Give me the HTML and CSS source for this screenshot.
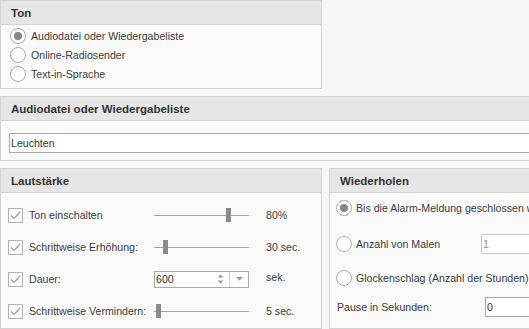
FILE: index.html
```html
<!DOCTYPE html>
<html>
<head>
<meta charset="utf-8">
<link rel="stylesheet" href="styles.css">
</head>
<body>
<div class="page">
  <div class="panel ton">
    <div class="hdr">Ton</div>
    <div class="ton-body">
      <div class="rrow"><span class="radio on"></span><span>Audiodatei oder Wiedergabeliste</span></div>
      <div class="rrow"><span class="radio"></span><span>Online-Radiosender</span></div>
      <div class="rrow"><span class="radio"></span><span>Text-in-Sprache</span></div>
    </div>
  </div>

  <div class="panel file">
    <div class="hdr">Audiodatei oder Wiedergabeliste</div>
    <div class="file-body">
      <div class="input wide">Leuchten</div>
    </div>
  </div>

  <div class="bottom">
    <div class="panel vol">
      <div class="hdr">Lautstärke</div>
      <div class="vol-body">
        <div class="crow">
          <div class="lab"><span class="check"><svg width="11" height="9" viewBox="0 0 11 9"><path d="M1 4.5 L4 7.5 L10 1" fill="none" stroke="#9a9a9a" stroke-width="1.2"/></svg></span>Ton einschalten</div>
          <div class="slider"><span class="track"></span><span class="thumb" style="left:72px"></span></div>
          <div class="val">80%</div>
        </div>
        <div class="crow">
          <div class="lab"><span class="check"><svg width="11" height="9" viewBox="0 0 11 9"><path d="M1 4.5 L4 7.5 L10 1" fill="none" stroke="#9a9a9a" stroke-width="1.2"/></svg></span>Schrittweise Erhöhung:</div>
          <div class="slider"><span class="track"></span><span class="thumb" style="left:9px"></span></div>
          <div class="val">30 sec.</div>
        </div>
        <div class="crow">
          <div class="lab"><span class="check"><svg width="11" height="9" viewBox="0 0 11 9"><path d="M1 4.5 L4 7.5 L10 1" fill="none" stroke="#9a9a9a" stroke-width="1.2"/></svg></span>Dauer:</div>
          <div class="spin">
            <span class="spin-text">600</span>
            <span class="spin-arrows"><svg width="7" height="12" viewBox="0 0 7 12"><path d="M0.5 4.5 L3.5 1.5 L6.5 4.5 Z M0.5 7.5 L3.5 10.5 L6.5 7.5 Z" fill="#9a9a9a"/></svg></span>
            <span class="spin-drop"><svg width="7" height="4" viewBox="0 0 7 4"><path d="M0 0 L7 0 L3.5 3.5 Z" fill="#9a9a9a"/></svg></span>
          </div>
          <div class="val up">sek.</div>
        </div>
        <div class="crow">
          <div class="lab"><span class="check"><svg width="11" height="9" viewBox="0 0 11 9"><path d="M1 4.5 L4 7.5 L10 1" fill="none" stroke="#9a9a9a" stroke-width="1.2"/></svg></span>Schrittweise Vermindern:</div>
          <div class="slider"><span class="track"></span><span class="thumb" style="left:2px"></span></div>
          <div class="val">5 sec.</div>
        </div>
      </div>
    </div>

    <div class="panel rep">
      <div class="hdr">Wiederholen</div>
      <div class="rep-body">
        <div class="prow r1"><span class="radio on"></span><span>Bis die Alarm-Meldung geschlossen wird</span></div>
        <div class="prow r2"><span class="radio"></span><span class="plab">Anzahl von Malen</span><div class="input small dis">1</div></div>
        <div class="prow r3"><span class="radio"></span><span>Glockenschlag (Anzahl der Stunden)</span></div>
        <div class="prow r4"><span class="plab2">Pause in Sekunden:</span><div class="input small">0</div></div>
      </div>
    </div>
  </div>
</div>
</body>
</html>
```

FILE: styles.css
```css
html, body {
  margin: 0;
  padding: 0;
  background: #f7f7f7;
  overflow: hidden;
}
body {
  width: 529px;
  height: 329px;
  font-family: "Liberation Sans", Arial, sans-serif;
  font-size: 10.6px;
  color: #3a3a3a;
}
.page {
  width: 620px;
  display: flex;
  flex-direction: column;
  gap: 7px;
}
.panel {
  border: 1px solid #d3d3d3;
  background: #fafafa;
  box-sizing: border-box;
}
.hdr {
  height: 23px;
  line-height: 25px;
  background: #e6e6e6;
  border-bottom: 1px solid #d3d3d3;
  padding-left: 10px;
  font-weight: bold;
  font-size: 11.5px;
  color: #333;
}
.ton {
  width: 322px;
  height: 89px;
}
.ton-body {
  padding: 1px 0 0 9px;
}
.rrow {
  height: 19px;
  display: flex;
  align-items: center;
  gap: 5px;
}
.radio {
  width: 16px;
  height: 16px;
  box-sizing: border-box;
  border: 1px solid #ababab;
  border-radius: 50%;
  background: #fff;
  display: flex;
  align-items: center;
  justify-content: center;
  flex: none;
}
.radio.on::after {
  content: "";
  width: 8px;
  height: 8px;
  border-radius: 50%;
  background: #858585;
}
.file {
  width: 620px;
  height: 65px;
}
.file-body {
  padding: 12px 0 0 8px;
}
.input {
  height: 20px;
  box-sizing: border-box;
  border: 1px solid #a9a9a9;
  background: #fff;
  line-height: 18px;
  padding-left: 1px;
  color: #333;
}
.input.wide {
  width: 600px;
}
.bottom {
  display: flex;
  gap: 7px;
}
.vol {
  width: 322px;
  height: 161px;
  flex: none;
}
.vol-body {
  padding: 6px 0 0 7px;
}
.crow {
  height: 32px;
  display: flex;
  align-items: center;
}
.lab {
  width: 146px;
  display: flex;
  align-items: center;
  gap: 6px;
}
.check {
  width: 15px;
  height: 15px;
  box-sizing: border-box;
  border: 1px solid #b4b4b4;
  background: #fdfdfd;
  display: flex;
  align-items: center;
  justify-content: center;
  flex: none;
}
.slider {
  width: 95px;
  height: 14px;
  position: relative;
  display: flex;
  align-items: center;
}
.track {
  width: 100%;
  height: 1px;
  background: #a2a2a2;
}
.thumb {
  position: absolute;
  top: 0;
  width: 5px;
  height: 14px;
  background: #8a8a8a;
}
.val {
  margin-left: 17px;
}
.val.up {
  margin-top: -4px;
}
.spin {
  width: 95px;
  height: 17px;
  box-sizing: border-box;
  border: 1px solid #a9a9a9;
  background: #fff;
  display: flex;
  align-items: center;
}
.spin-text {
  flex: 1;
  padding-left: 1px;
  color: #333;
}
.spin-arrows {
  width: 12px;
  display: flex;
  align-items: center;
  justify-content: flex-start;
  height: 100%;
}
.spin-drop {
  width: 18px;
  height: 100%;
  border-left: 1px solid #cfcfcf;
  display: flex;
  align-items: center;
  justify-content: center;
}
.rep {
  width: 240px;
  height: 161px;
  flex: none;
}
.rep-body {
  padding: 5px 0 0 6px;
}
.prow {
  height: 20px;
  display: flex;
  align-items: center;
  gap: 4px;
  white-space: nowrap;
}
.r2 { margin-top: 16px; }
.r3 { margin-top: 14px; }
.r4 { margin-top: 9px; }
.plab {
  width: 121px;
}
.plab2 {
  width: 144px;
  padding-left: 1px;
}
.input.small {
  width: 80px;
}
.input.dis {
  border-color: #c9c9c9;
  color: #8c8ca8;
}
```
